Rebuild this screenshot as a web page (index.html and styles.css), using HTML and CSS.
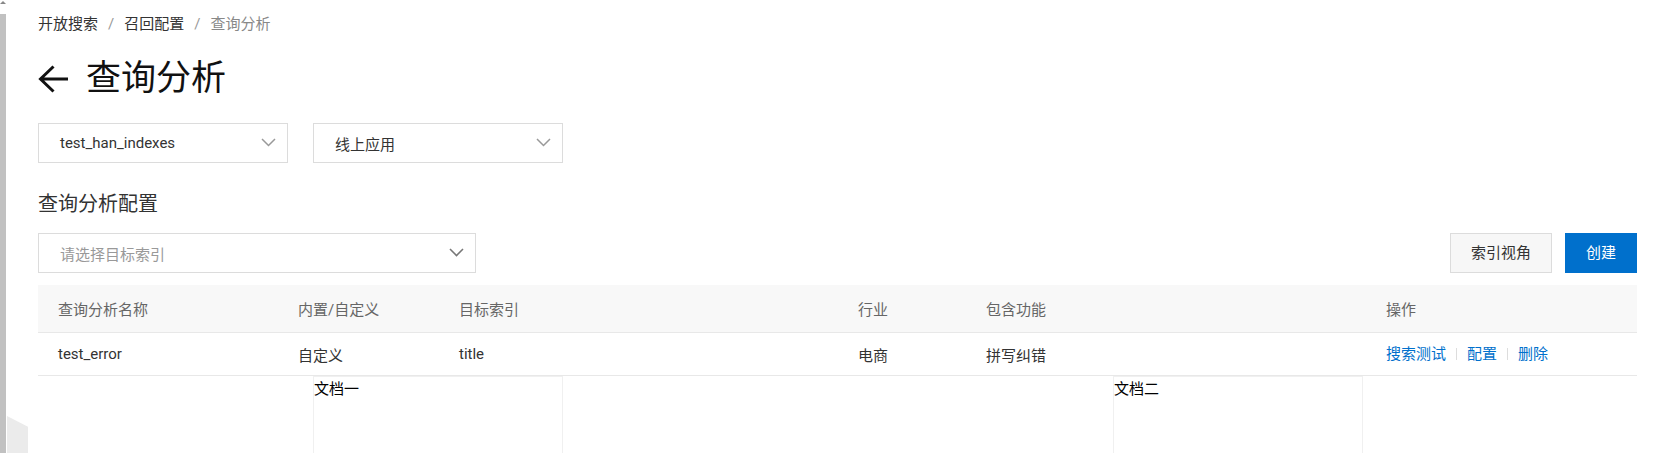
FILE: index.html
```html
<!DOCTYPE html>
<html lang="zh-CN">
<head>
<meta charset="utf-8">
<title>查询分析</title>
<link rel="stylesheet" href="styles.css">
</head>
<body>
<div class="side-caret"></div>
<div class="side-scroll"></div>
<div class="side-corner"></div>
<main class="page">
  <nav class="breadcrumb">
    <a class="crumb">开放搜索</a><span class="sep">/</span><a class="crumb">召回配置</a><span class="sep">/</span><span class="crumb current">查询分析</span>
  </nav>
  <header class="title-row">
    <svg class="back" width="30" height="28" viewBox="0 0 30 28"><path d="M30 14H3M15.5 1.5L2.5 14L15.5 26.5" fill="none" stroke="#111" stroke-width="3"/></svg>
    <h1 class="title">查询分析</h1>
  </header>
  <div class="filters">
    <div class="select w250"><span class="select-text">test_han_indexes</span><svg class="chev" width="15" height="9" viewBox="0 0 15 9"><path d="M1 1L7.5 7.5L14 1" fill="none" stroke="#999" stroke-width="1.5"/></svg></div>
    <div class="select w250"><span class="select-text">线上应用</span><svg class="chev" width="15" height="9" viewBox="0 0 15 9"><path d="M1 1L7.5 7.5L14 1" fill="none" stroke="#999" stroke-width="1.5"/></svg></div>
  </div>
  <h2 class="section-title">查询分析配置</h2>
  <div class="toolbar">
    <div class="select w438"><span class="select-text placeholder">请选择目标索引</span><svg class="chev" width="15" height="9" viewBox="0 0 15 9"><path d="M1 1L7.5 7.5L14 1" fill="none" stroke="#777" stroke-width="1.6"/></svg></div>
    <div class="actions">
      <button class="btn">索引视角</button>
      <button class="btn primary">创建</button>
    </div>
  </div>
  <table class="grid">
    <colgroup>
      <col class="c1"><col class="c2"><col class="c3"><col class="c4"><col class="c5"><col class="c6">
    </colgroup>
    <thead>
      <tr><th>查询分析名称</th><th>内置/自定义</th><th>目标索引</th><th>行业</th><th>包含功能</th><th>操作</th></tr>
    </thead>
    <tbody>
      <tr>
        <td>test_error</td><td>自定义</td><td>title</td><td>电商</td><td>拼写纠错</td>
        <td><span class="ops"><a class="op">搜索测试</a><a class="op">配置</a><a class="op">删除</a></span></td>
      </tr>
    </tbody>
  </table>
  <div class="compare">
    <div class="pane">文档一</div>
    <div class="pane">文档二</div>
  </div>
</main>
</body>
</html>
```
FILE: styles.css
```css
html, body {
  margin: 0;
  padding: 0;
  overflow: hidden;
  background: #fff;
}
body {
  font-family: Roboto, "Noto Sans CJK SC", sans-serif;
  color: #333;
  position: relative;
  min-height: 453px;
}
.side-scroll {
  position: absolute;
  left: 0;
  top: 14px;
  width: 6px;
  height: 460px;
  background: #c1c1c1;
}
.side-caret {
  position: absolute;
  left: 0;
  top: 1px;
  width: 0;
  height: 0;
  border-left: 3px solid transparent;
  border-right: 3px solid transparent;
  border-bottom: 3px solid #888;
}
.side-corner {
  position: absolute;
  left: 7px;
  top: 416px;
  width: 21px;
  height: 40px;
  background: #ebebeb;
  clip-path: polygon(0 0, 100% 27%, 100% 100%, 0 100%);
}
.page {
  padding: 14px 28px 0 38px;
}
.breadcrumb {
  display: flex;
  align-items: center;
  height: 20px;
  font-size: 15px;
  line-height: 20px;
}
.crumb {
  color: #333;
}
.crumb.current {
  color: #888;
}
.sep {
  color: #999;
  margin: 0 10px;
}
.title-row {
  display: flex;
  align-items: center;
  gap: 18px;
  margin-top: 23px;
  height: 44px;
}
.back {
  display: block;
  flex: none;
}
.title {
  margin: 0;
  font-size: 35px;
  line-height: 44px;
  font-weight: normal;
  color: #111;
}
.filters {
  display: flex;
  gap: 25px;
  margin-top: 22px;
}
.select {
  box-sizing: border-box;
  height: 40px;
  border: 1px solid #dcdcdc;
  background: #fff;
  padding: 0 11px 0 21px;
  display: flex;
  align-items: center;
  justify-content: space-between;
  font-size: 15px;
}
.w250 {
  width: 250px;
}
.w438 {
  width: 438px;
}
.select-text {
  color: #333;
}
.select-text.placeholder {
  color: #999;
}
.chev {
  display: block;
  margin-top: -2px;
}
.section-title {
  margin: 27px 0 0;
  font-size: 20px;
  line-height: 28px;
  font-weight: normal;
  color: #333;
}
.toolbar {
  display: flex;
  justify-content: space-between;
  align-items: center;
  margin-top: 15px;
}
.actions {
  display: flex;
  gap: 13px;
}
.btn {
  box-sizing: border-box;
  height: 40px;
  padding: 0 20px;
  border: 1px solid #dcdcdc;
  background: #f7f7f7;
  color: #333;
  font-family: inherit;
  font-size: 15px;
  line-height: 20px;
}
.btn.primary {
  background: #0070cc;
  border-color: #0070cc;
  color: #fff;
}
.grid {
  margin-top: 12px;
  width: 100%;
  border-collapse: collapse;
  table-layout: fixed;
  font-size: 15px;
}
.c1 { width: 240px; }
.c2 { width: 161px; }
.c3 { width: 399px; }
.c4 { width: 128px; }
.c5 { width: 400px; }
.c6 { width: 271px; }
.grid th {
  background: #f8f8f8;
  height: 47px;
  padding: 0 0 0 20px;
  text-align: left;
  font-weight: normal;
  color: #666;
  border-bottom: 1px solid #e8e8e8;
}
.grid td {
  height: 42px;
  padding: 0 0 0 20px;
  color: #333;
  border-bottom: 1px solid #e8e8e8;
}
.ops {
  display: flex;
  align-items: center;
}
.op {
  color: #0070cc;
  padding: 0 10px;
  line-height: 12px;
  border-left: 1px solid #ddd;
}
.op:first-child {
  padding-left: 0;
  border-left: none;
}
.compare {
  display: flex;
  gap: 550px;
  padding-left: 275px;
}
.pane {
  box-sizing: border-box;
  width: 250px;
  height: 120px;
  border: 1px solid #f0f0f0;
  font-size: 15px;
  color: #000;
}
```
